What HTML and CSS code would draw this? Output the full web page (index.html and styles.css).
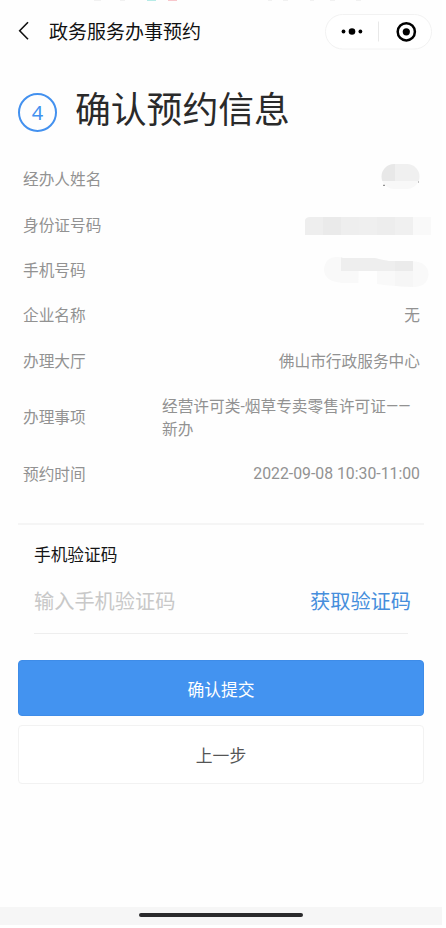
FILE: index.html
```html
<!DOCTYPE html>
<html lang="zh-CN">
<head>
<meta charset="utf-8">
<title>政务服务办事预约</title>
<link rel="stylesheet" href="styles.css">
</head>
<body>
<div class="screen">
  <div class="status">
    <svg width="442" height="2" viewBox="0 0 442 2"><path d="M94 .3h7M120 .3h5M268 .3h4M283 .3h5M310 .3h4M330 .3h5M356 .3h5" stroke="#e4e4e4" stroke-width=".6"/><path d="M147 .3h9" stroke="#a5e6e2"/><path d="M168 .3h9" stroke="#f7b9c0"/></svg>
  </div>
  <header class="nav">
    <svg class="back" width="12" height="20" viewBox="0 0 12 20"><path d="M10 1.2 1.7 9.7 10 18.2" fill="none" stroke="#111" stroke-width="1.6"/></svg>
    <h1 class="nav-title">政务服务办事预约</h1>
    <div class="capsule">
      <svg width="107" height="36" viewBox="0 0 107 36"><rect x=".5" y=".5" width="106" height="34.5" rx="17.2" fill="#fff" stroke="#f2f2f2"/><path d="M53.5 7.500v20" stroke="#e8e8e8"/><circle cx="18.500" cy="17.500" r="1.900"/><circle cx="27" cy="17.500" r="3.300"/><circle cx="35.400" cy="17.500" r="1.900"/><circle cx="81.300" cy="17.800" r="8.600" fill="none" stroke="#000" stroke-width="2.500"/><circle cx="81.300" cy="17.800" r="3.600"/></svg>
    </div>
  </header>
  <div class="step">
    <span class="step-num">4</span>
    <h2 class="step-title">确认预约信息</h2>
  </div>
  <dl class="info">
    <div class="row"><dt>经办人姓名</dt><dd>
      <svg class="mask mask-name" width="39" height="26" viewBox="0 0 39 26"><clipPath id="a"><rect x=".5" width="38" height="25" rx="12.5"/></clipPath><g clip-path="url(#a)"><path d="M0 0h14v17H0z" fill="#e8e8e8"/><path d="M14 0h25v17H14z" fill="#f0f0f0"/><path d="M0 17h39v9H0z" fill="#f8f8f8"/></g><path d="M2 21.300h2" stroke="#777"/><path d="M37.500 17v2" stroke="#aaa" stroke-width=".7"/></svg></dd></div>
    <div class="row"><dt>身份证号码</dt><dd>
      <svg class="mask mask-id" width="126" height="18" viewBox="0 0 126 18"><path d="M0 18V3q1-3 5-3h13v18z" fill="#eee"/><path d="M18 0h18v18H18z" fill="#eaeaea"/><path d="M36 0h18v18H36z" fill="#eee"/><path d="M54 0h18v18H54z" fill="#efefef"/><path d="M72 0h18v18H72z" fill="#ededed"/><path d="M90 0h18v18H90z" fill="#f0f0f0"/><path d="M108 0h18v18h-18z" fill="#f9f9f9"/></svg></dd></div>
    <div class="row"><dt>手机号码</dt><dd>
      <svg class="mask mask-phone" width="105" height="31" viewBox="0 0 105 31"><clipPath id="b"><path d="M13 0Q17 0 19 1H51Q58 3 65 4H88Q104 5 104.500 17Q104 29 91 30Q65 29 53 27V14H34.500V26H18Q0 24 0 12.500Q1 0 13 0Z"/></clipPath><g clip-path="url(#b)"><path d="M0 0h105v31H0z" fill="#f9f9f9"/><path d="M17 0h54v14H17z" fill="#eee"/><path d="M71 0h18v14H71z" fill="#ebebeb"/><path d="M71 14h18v17H71z" fill="#f6f6f6"/></g></svg></dd></div>
    <div class="row"><dt>企业名称</dt><dd>无</dd></div>
    <div class="row"><dt>办理大厅</dt><dd>佛山市行政服务中心</dd></div>
    <div class="row row-tall"><dt>办理事项</dt><dd class="matter">经营许可类-烟草专卖零售许可证——<br>新办</dd></div>
    <div class="row"><dt>预约时间</dt><dd class="time">2022-09-08 10:30-11:00</dd></div>
  </dl>
  <section class="verify">
    <h3 class="verify-title">手机验证码</h3>
    <div class="verify-field"><span class="placeholder">输入手机验证码</span><a class="get-code">获取验证码</a></div>
  </section>
  <div class="actions">
    <button class="btn btn-primary">确认提交</button>
    <button class="btn btn-plain">上一步</button>
  </div>
  <footer class="home"><span class="home-bar"></span></footer>
</div>
</body>
</html>
```
FILE: styles.css
```css
* { box-sizing: border-box; }
body {
  margin: 0;
  background: #fff;
  font-family: Roboto, "Noto Sans CJK SC", sans-serif;
  font-weight: 400;
}
h1, h2, h3, dl, dd { margin: 0; font-weight: 400; }
svg { display: block; }
.screen {
  width: 442px;
  height: 925px;
  display: flex;
  flex-direction: column;
  background: #fefefe;
}
.status { height: 2px; }
.nav {
  height: 60px;
  display: flex;
  align-items: center;
  padding: 0 10px 0 18px;
}
.back { margin-top: -2px; }
.nav-title {
  margin-left: 19px;
  margin-top: 2px;
  font-size: 19px;
  line-height: 28px;
  color: #111;
}
.capsule { margin-left: auto; }
.step {
  height: 95px;
  display: flex;
  align-items: center;
  padding: 0 18px 3px;
}
.step-num {
  width: 39px;
  height: 39px;
  margin-top: 8px;
  border: 2px solid #4391ef;
  border-radius: 50%;
  text-align: center;
  font: 20px/35px "Noto Sans", sans-serif;
  color: #4391ef;
}
.step-title {
  margin-left: 18px;
  margin-top: 5px;
  font-size: 35.8px;
  line-height: 50px;
  color: #2a2a2a;
}
.info { padding: 0 22px 0 23px; color: #929292; font-size: 15.7px; }
.row {
  height: 45.4px;
  display: flex;
  align-items: center;
  justify-content: space-between;
  line-height: 23px;
}
.row-tall { height: 68px; }
.matter { width: 258px; white-space: nowrap; }
.time { margin-top: -2px; font-size: 15.8px; }
.mask-name { margin: -5px 0 0; }
.mask-id { margin: 2px -11px 0 0; }
.mask-phone { margin: 4px -9px 0 0; }
.verify {
  margin: 26px 18px 0;
  padding: 16px 16px 0;
  border-top: 2px solid #f5f5f5;
  height: 111px;
}
.verify-title {
  font-size: 16.7px;
  line-height: 30px;
  color: #151515;
}
.verify-field {
  height: 63px;
  display: flex;
  justify-content: space-between;
  padding: 16px 0 0;
  border-bottom: 1px solid #eee;
  font-size: 20.2px;
  line-height: 30px;
}
.placeholder { color: #c8c8c8; }
.get-code { color: #468edc; margin-right: -3px; }
.actions {
  margin: 26px 18px 0;
  display: flex;
  flex-direction: column;
  gap: 9px;
}
.btn {
  font: 400 16.8px/24px Roboto, "Noto Sans CJK SC", sans-serif;
  border-radius: 4px;
  padding: 3px 0 0;
}
.btn-primary { height: 56px; border: 1px solid #3e8ce8; background: #4393f0; color: #fff; }
.btn-plain { height: 59px; border: 1px solid #f2f2f2; background: #fff; color: #555; }
.home {
  margin-top: auto;
  height: 18px;
  background: #f6f6f6;
  display: flex;
  justify-content: center;
  padding-top: 6px;
}
.home-bar { width: 164px; height: 4px; border-radius: 2px; background: #2a2a2c; }
```
